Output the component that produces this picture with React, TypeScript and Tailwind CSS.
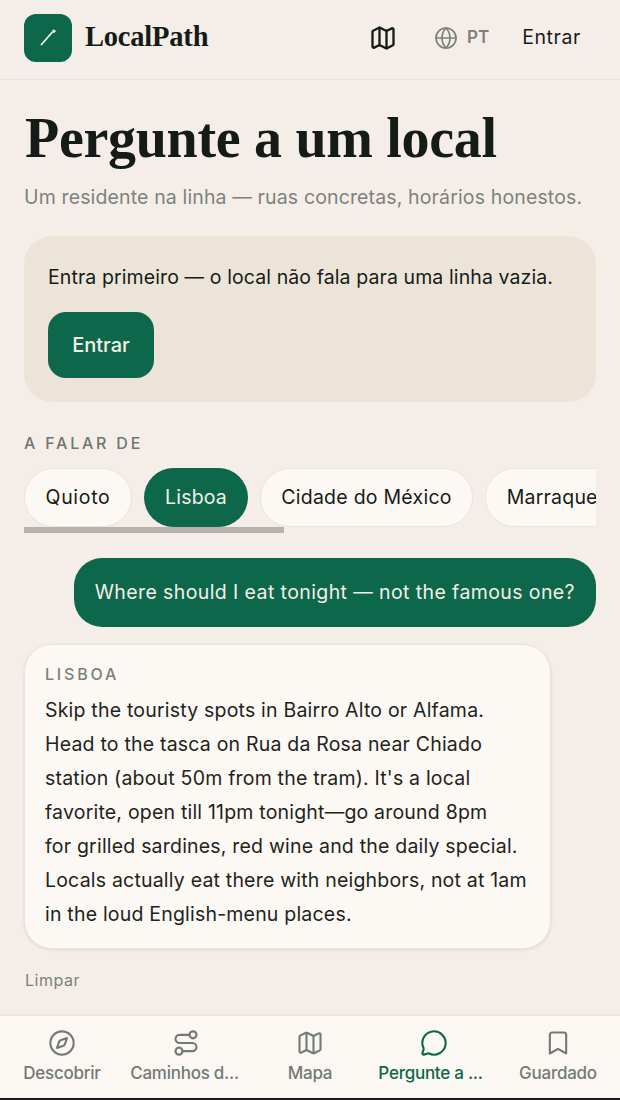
import { Map, Globe, Compass, Route, MessageCircle, Bookmark } from "lucide-react";

const sans = "font-['Inter','Noto_Sans',sans-serif]";

const chips = [
  { label: "Quioto", active: false, width: "w-[108px] tracking-[0.7px]" },
  { label: "Lisboa", active: true, width: "w-[104px] tracking-[0.2px]" },
  { label: "Cidade do México", active: false, width: "w-[213px] tracking-[0.25px]" },
  { label: "Marraquexe", active: false, width: "w-[156px] tracking-[0.2px]" },
];

const navItems = [
  { label: "Descobrir", Icon: Compass, active: false, shift: "" },
  { label: "Caminhos d...", Icon: Route, active: false, shift: "pr-[3px]" },
  { label: "Mapa", Icon: Map, active: false, shift: "" },
  { label: "Pergunte a ...", Icon: MessageCircle, active: true, shift: "pr-[7px]" },
  { label: "Guardado", Icon: Bookmark, active: false, shift: "" },
];

const answer = [
  "Skip the touristy spots in Bairro Alto or Alfama.",
  "Head to the tasca on Rua da Rosa near Chiado",
  "station (about 50m from the tram). It's a local",
  "favorite, open till 11pm tonight—go around 8pm",
  "for grilled sardines, red wine and the daily special.",
  "Locals actually eat there with neighbors, not at 1am",
  "in the loud English-menu places.",
];

export default function App() {
  return (
    <div className={`${sans} flex h-[1100px] w-[620px] flex-col overflow-hidden bg-[#f5eee8] text-[#151c18]`}>
      <header className="flex h-[80px] shrink-0 items-center border-b border-[#eae3da] pb-[4px] pl-6 pr-[39px]">
        <div className="flex h-12 w-12 items-center justify-center rounded-[12px] bg-[#0d674a]">
          <svg width="24" height="24" viewBox="0 0 24 24" fill="none" stroke="#f8f3ec" strokeLinecap="round">
            <path d="M5.5 18.5 16 6.5" strokeWidth="1.7" />
            <circle cx="17.8" cy="5.2" r="1.3" fill="#f8f3ec" strokeWidth="0.8" />
          </svg>
        </div>
        <span className="ml-[13px] font-['Liberation_Serif',serif] text-[28.5px] font-bold tracking-[-0.2px] text-[#151c18]">LocalPath</span>
        <Map className="ml-auto h-[28px] w-[28px] text-[#151c18]" strokeWidth={2} />
        <Globe className="ml-[37px] h-[24px] w-[24px] text-[#7b827c]" strokeWidth={1.7} />
        <span className="ml-[9px] text-[17px] font-semibold text-[#7b827c]">PT</span>
        <span className="ml-[33px] text-[19.5px] tracking-[0.6px] text-[#151c18]">Entrar</span>
      </header>

      <main className="flex min-h-0 flex-1 flex-col px-6">
        <h1 className="mt-[28px] pl-px font-['Liberation_Serif',serif] text-[56px] font-bold leading-[60px] tracking-[-0.3px] text-[#151c18]">Pergunte a um local</h1>
        <p className="mt-[15px] text-[19.5px] leading-[28px] tracking-[0.14px] text-[#7b827c]">Um residente na linha — ruas concretas, horários honestos.</p>

        <section className="mt-[25px] h-[166px] rounded-[28px] bg-[#ece4d9] px-6 pt-[27px]">
          <p className="text-[19.5px] leading-[28px] tracking-[0.1px] text-[#151c18]">Entra primeiro — o local não fala para uma linha vazia.</p>
          <button className="mt-[21px] h-[66px] w-[106px] rounded-[18px] bg-[#0d674a] text-[20px] font-medium text-[#f5eee8]">Entrar</button>
        </section>

        <p className="mt-[30px] text-[16px] font-medium leading-[22px] tracking-[2.8px] text-[#6f766f]">A FALAR DE</p>

        <div className="relative mt-[14px] h-[65px] overflow-hidden">
          <div className="flex gap-3">
            {chips.map((c) => (
              <span
                key={c.label}
                className={`flex h-[59px] shrink-0 items-center justify-center whitespace-nowrap rounded-full text-[19.5px] ${c.width} ${
                  c.active
                    ? "bg-[#0d674a] text-[#f5eee8]"
                    : "border border-[#ebe4dc] bg-[#fcf8f4] text-[#151c18]"
                }`}
              >
                {c.label}
              </span>
            ))}
          </div>
          <div className="absolute bottom-0 left-0 h-[6px] w-[260px] bg-[#b5b1ad]" />
        </div>

        <div className="mt-[25px] flex justify-end">
          <div className="flex h-[69px] items-center rounded-[28px] bg-[#0d674a] px-[21px] text-[19.5px] tracking-[0.4px] text-[#f5eee8]">
            Where should I eat tonight — not the famous one?
          </div>
        </div>

        <div className="mt-[17px] h-[305px] w-[527px] rounded-[28px] border border-[#ebe4dc] bg-[#fcf8f4] px-[20px] pt-[17px] shadow-[0_1px_3px_rgba(60,50,40,0.12)]">
          <p className="text-[16px] font-medium leading-[24px] tracking-[2.8px] text-[#7b827c]">LISBOA</p>
          <div className="mt-[7px] text-[19.5px] leading-[34px] tracking-[0.2px] text-[#1d2420]">
            {answer.map((line) => (
              <div key={line} className="whitespace-nowrap">{line}</div>
            ))}
          </div>
        </div>

        <p className="mt-[20px] pl-px text-[16px] leading-[22px] tracking-[0.5px] text-[#7b827c]">Limpar</p>
      </main>

      <nav className="grid h-[84px] shrink-0 grid-cols-5 border-t-2 border-[#ebe5de] bg-[#fbf8f4]">
        {navItems.map(({ label, Icon, active, shift }) => (
          <div key={label} className={`flex flex-col items-center pt-[13px] ${active ? "text-[#0d674a]" : "text-[#737a74]"}`}>
            <Icon className="h-[28px] w-[28px]" strokeWidth={1.8} />
            <span className={`mt-[5px] whitespace-nowrap text-[17px] font-medium leading-[22px] tracking-[-0.25px] ${shift}`}>{label}</span>
          </div>
        ))}
      </nav>
      <div className="h-[2px] shrink-0 bg-[#1a1a1a]" />
    </div>
  );
}
